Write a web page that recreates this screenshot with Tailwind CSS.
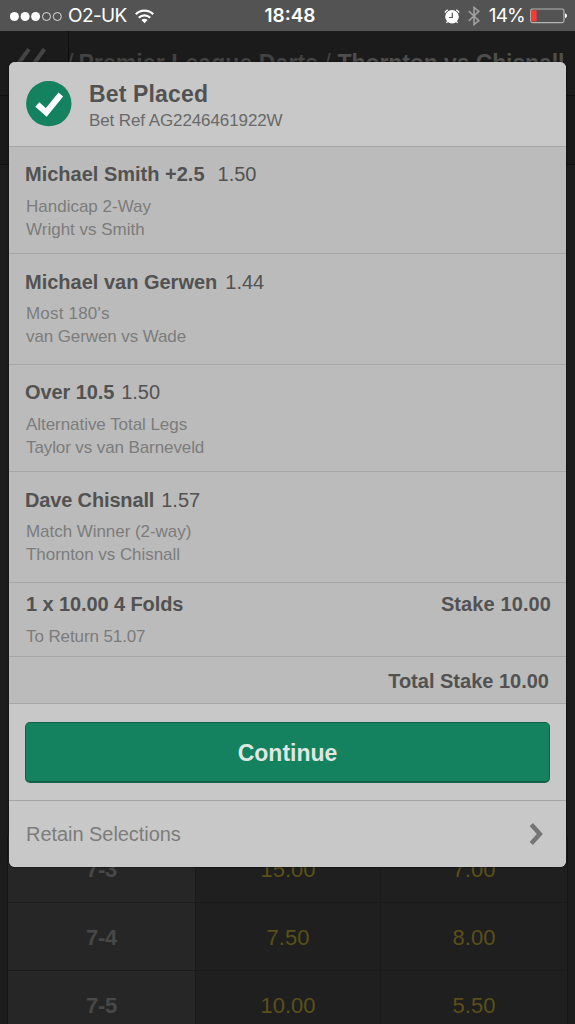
<!DOCTYPE html>
<html lang="en">

<head>
  <meta charset="UTF-8">
  <meta name="viewport" content="width=device-width, initial-scale=1.0">
  <title>Bet Placed</title>
  <script src="https://cdn.jsdelivr.net/npm/@tailwindcss/browser@4"></script>
</head>

<body class="relative w-[575px] h-[1024px] overflow-hidden flex flex-col bg-[#1c1c1c] font-['Liberation_Sans',Arial,sans-serif] whitespace-nowrap">
  <!-- Status Bar -->
  <div class="h-[31px] shrink-0 bg-[#535353] text-white font-['Inter',sans-serif] text-[19px] grid grid-cols-3 items-center pl-[10px] pr-[9px] pt-[2px]">
    <div class="flex items-center">
      <svg width="52" height="10" viewBox="0 0 52 10" fill="#fff">
        <circle cx="4.4" cy="4.5" r="4.5" />
        <circle cx="15.1" cy="4.5" r="4.5" />
        <circle cx="25.6" cy="4.5" r="4.5" />
        <circle cx="36.5" cy="4.5" r="4" fill="none" stroke="#fff" stroke-width=".8" />
        <circle cx="47.3" cy="4.5" r="4" fill="none" stroke="#fff" stroke-width=".8" />
      </svg>
      <span class="ml-[6px] tracking-[-0.6px]">O2-UK</span>
      <svg class="ml-[8px]" width="19" height="15" viewBox="0 0 19 15" fill="none" stroke="#fff" stroke-width="2.2">
        <path d="M.8 5.2a12.3 12.3 0 0 1 17.4 0" />
        <path d="M3.8 8.7a8.1 8.1 0 0 1 11.4 0" />
        <path d="M9.5 14.2 6.4 11a4.4 4.4 0 0 1 6.2 0z" fill="#fff" stroke="none" />
      </svg>
    </div>
    <div class="pl-[4px] text-center font-semibold">18:48</div>
    <div class="flex items-center justify-end">
      <svg width="16" height="16" viewBox="0 0 16 16">
        <circle cx="8" cy="7.8" r="6.8" fill="#fff" />
        <path d="M.9 3.6A6 6 0 0 1 3.7.8M15.1 3.6a6 6 0 0 0-2.8-2.8" fill="none" stroke="#fff" stroke-width="1.3" />
        <path d="M3.4 12.6 2.5 14M12.6 12.6l.9 1.4" fill="none" stroke="#fff" stroke-width="1.3" />
        <path d="M8.3 3.8v4.7H5" fill="none" stroke="#535353" stroke-width="1.2" />
      </svg>
      <svg class="ml-[8px] -mt-[2px]" width="12" height="20" viewBox="0 0 12 20" fill="none" stroke="#a0a0a0" stroke-width="1.6">
        <path d="M.8 5.2 10.8 14.6 6 18.5v-17l4.8 3.9L.8 14.8" />
      </svg>
      <span class="ml-[9px] tracking-[-0.8px]">14%</span>
      <svg class="-mr-[1px] -mt-[2px] ml-[5px]" width="37" height="16" viewBox="0 0 37 16">
        <rect x=".7" y="1" width="33.2" height="13.6" rx="1.8" fill="none" stroke="#b5b5b5" stroke-width="1.2" />
        <rect x="2" y="2.3" width="4.6" height="11" fill="#ff3a30" />
        <path d="M35 5.3q2 .6 2 2.5t-2 2.5z" fill="#fff" />
      </svg>
    </div>
  </div>

  <!-- Page Header -->
  <div class="h-[65px] shrink-0 flex bg-[#1b1b1b] border-b border-[#101010]">
    <div class="w-[69px] border-r border-[#0d0d0d] pt-[16px] pl-[17px]">
      <svg width="30" height="30" viewBox="0 0 30 30" fill="none" stroke="#444" stroke-width="4">
        <path d="M12 2 2.5 15 12 28M27.500 2 18 15 27.500 28" />
      </svg>
    </div>
    <div class="pt-[17px] flex text-[23px] leading-[30px] font-bold text-[#424242]">
      <span class="-ml-[2px] font-normal">/</span>
      <span class="ml-[5px] tracking-[0.1px]">Premier League Darts</span>
      <span class="ml-[6px] font-normal">/</span>
      <span class="ml-[7px] tracking-[-0.1px] text-[#4e4e4e]">Thornton vs Chisnall</span>
    </div>
  </div>
  <div class="h-[69px] shrink-0 bg-[#191919] border-b border-[#101010]"></div>

  <!-- Odds Table -->
  <div class="mt-auto mx-[7px] h-[189px] overflow-hidden border-x border-[#151515] text-[22px]">
    <div class="grid grid-cols-[187px_185px_1fr] auto-rows-[68px] bg-[#1f1f1f] text-center leading-[69px] text-[#5a5018]">
      <div class="bg-[#262626] border-b border-[#1b1b1b] text-[#484848] font-bold tracking-[-0.3px]">7-3</div>
      <div class="border-b border-l border-[#1a1a1a]">15.00</div>
      <div class="border-b border-l border-[#1a1a1a]">7.00</div>
      <div class="bg-[#262626] border-b border-[#1b1b1b] text-[#484848] font-bold tracking-[-0.3px]">7-4</div>
      <div class="border-b border-l border-[#1a1a1a]">7.50</div>
      <div class="border-b border-l border-[#1a1a1a]">8.00</div>
      <div class="bg-[#262626] border-b border-[#1b1b1b] text-[#484848] font-bold tracking-[-0.3px]">7-5</div>
      <div class="border-b border-l border-[#1a1a1a]">10.00</div>
      <div class="border-b border-l border-[#1a1a1a]">5.50</div>
    </div>
  </div>

  <!-- Bet Receipt -->
  <div class="absolute left-[9px] top-[62px] w-[557px] h-[805px] rounded-[6px] overflow-hidden flex flex-col bg-[#bbb] text-[17px] leading-[23px] text-[#7c7c7c] shadow-[0_0_2px_#0a0a0a]">
    <div class="h-[85px] shrink-0 bg-[#c8c8c8] border-b border-[#a6a6a6] flex pl-[17px]">
      <svg class="mt-[19px]" width="46" height="46" viewBox="0 0 46 46">
        <circle cx="22.8" cy="22.6" r="22.7" fill="#15825f" />
        <path d="M11.3 23.5 20.3 31.500 34.800 13.500" fill="none" stroke="#fff" stroke-width="6" />
      </svg>
      <div class="ml-[17px] pt-[18px]">
        <h1 class="text-[23px] leading-[28px] font-bold text-[#525252] tracking-[0.15px]">Bet Placed</h1>
        <p class="leading-[25px] text-[#696969] tracking-[-0.1px]">Bet Ref AG2246461922W</p>
      </div>
    </div>

    <!-- Selections -->
    <div class="h-[107px] shrink-0 border-b border-[#a6a6a6] pl-[16px] pt-[14px]">
      <div class="text-[20px] leading-[26px] text-[#525252]"><b>Michael Smith +2.5</b><span class="ml-[13px]">1.50</span></div>
      <div class="pl-[1px] pt-[8px]">
        <p>Handicap 2-Way</p>
        <p>Wright vs Smith</p>
      </div>
    </div>
    <div class="h-[111px] shrink-0 border-b border-[#a6a6a6] pl-[16px] pt-[15px]">
      <div class="text-[20px] leading-[26px] text-[#525252]"><b>Michael van Gerwen</b><span class="ml-[8px]">1.44</span></div>
      <div class="pl-[1px] pt-[7px]">
        <p class="tracking-[0.2px]">Most 180's</p>
        <p class="tracking-[-0.1px]">van Gerwen vs Wade</p>
      </div>
    </div>
    <div class="h-[107px] shrink-0 border-b border-[#a6a6a6] pl-[16px] pt-[14px]">
      <div class="text-[20px] leading-[26px] text-[#525252]"><b class="tracking-[-0.1px]">Over 10.5</b><span class="ml-[7px]">1.50</span></div>
      <div class="pl-[1px] pt-[8px]">
        <p class="tracking-[-0.05px]">Alternative Total Legs</p>
        <p class="tracking-[-0.1px]">Taylor vs van Barneveld</p>
      </div>
    </div>
    <div class="h-[111px] shrink-0 border-b border-[#a6a6a6] pl-[16px] pt-[15px]">
      <div class="text-[20px] leading-[26px] text-[#525252]"><b class="tracking-[-0.15px]">Dave Chisnall</b><span class="ml-[7px]">1.57</span></div>
      <div class="pl-[1px] pt-[7px] tracking-[-0.05px]">
        <p>Match Winner (2-way)</p>
        <p>Thornton vs Chisnall</p>
      </div>
    </div>

    <!-- Stakes -->
    <div class="h-[74px] shrink-0 border-b border-[#a6a6a6] pl-[17px] pr-[15px] pt-[8px]">
      <div class="flex justify-between text-[20px] leading-[26px] font-bold text-[#525252]">
        <span class="tracking-[-0.1px]">1 x 10.00 4 Folds</span>
        <span class="tracking-[0.1px]">Stake 10.00</span>
      </div>
      <p class="pt-[8px] tracking-[-0.1px]">To Return 51.07</p>
    </div>
    <div class="h-[47px] shrink-0 border-b border-[#a6a6a6] pr-[17px] pt-[11px] text-right text-[20px] leading-[26px] font-bold text-[#525252]">Total Stake 10.00</div>

    <!-- Actions -->
    <div class="h-[97px] shrink-0 bg-[#c8c8c8] border-b border-[#a6a6a6] px-[16px] pt-[18px]">
      <button class="block w-full h-[61px] rounded-[5px] bg-[#15825f] border border-b-2 border-[#16604a] pt-[2px] text-[23px] font-bold text-[#dfe7e3]">Continue</button>
    </div>
    <div class="grow bg-[#c8c8c8] flex items-center justify-between pl-[17px] pr-[22px] text-[20px]">
      <span class="tracking-[-0.05px]">Retain Selections</span>
      <svg width="15" height="24" viewBox="0 0 15 24" fill="none" stroke="#757575" stroke-width="4.5">
        <path d="M2.300 2.500 10.800 12 2.300 21.500" />
      </svg>
    </div>
  </div>
</body>

</html>
